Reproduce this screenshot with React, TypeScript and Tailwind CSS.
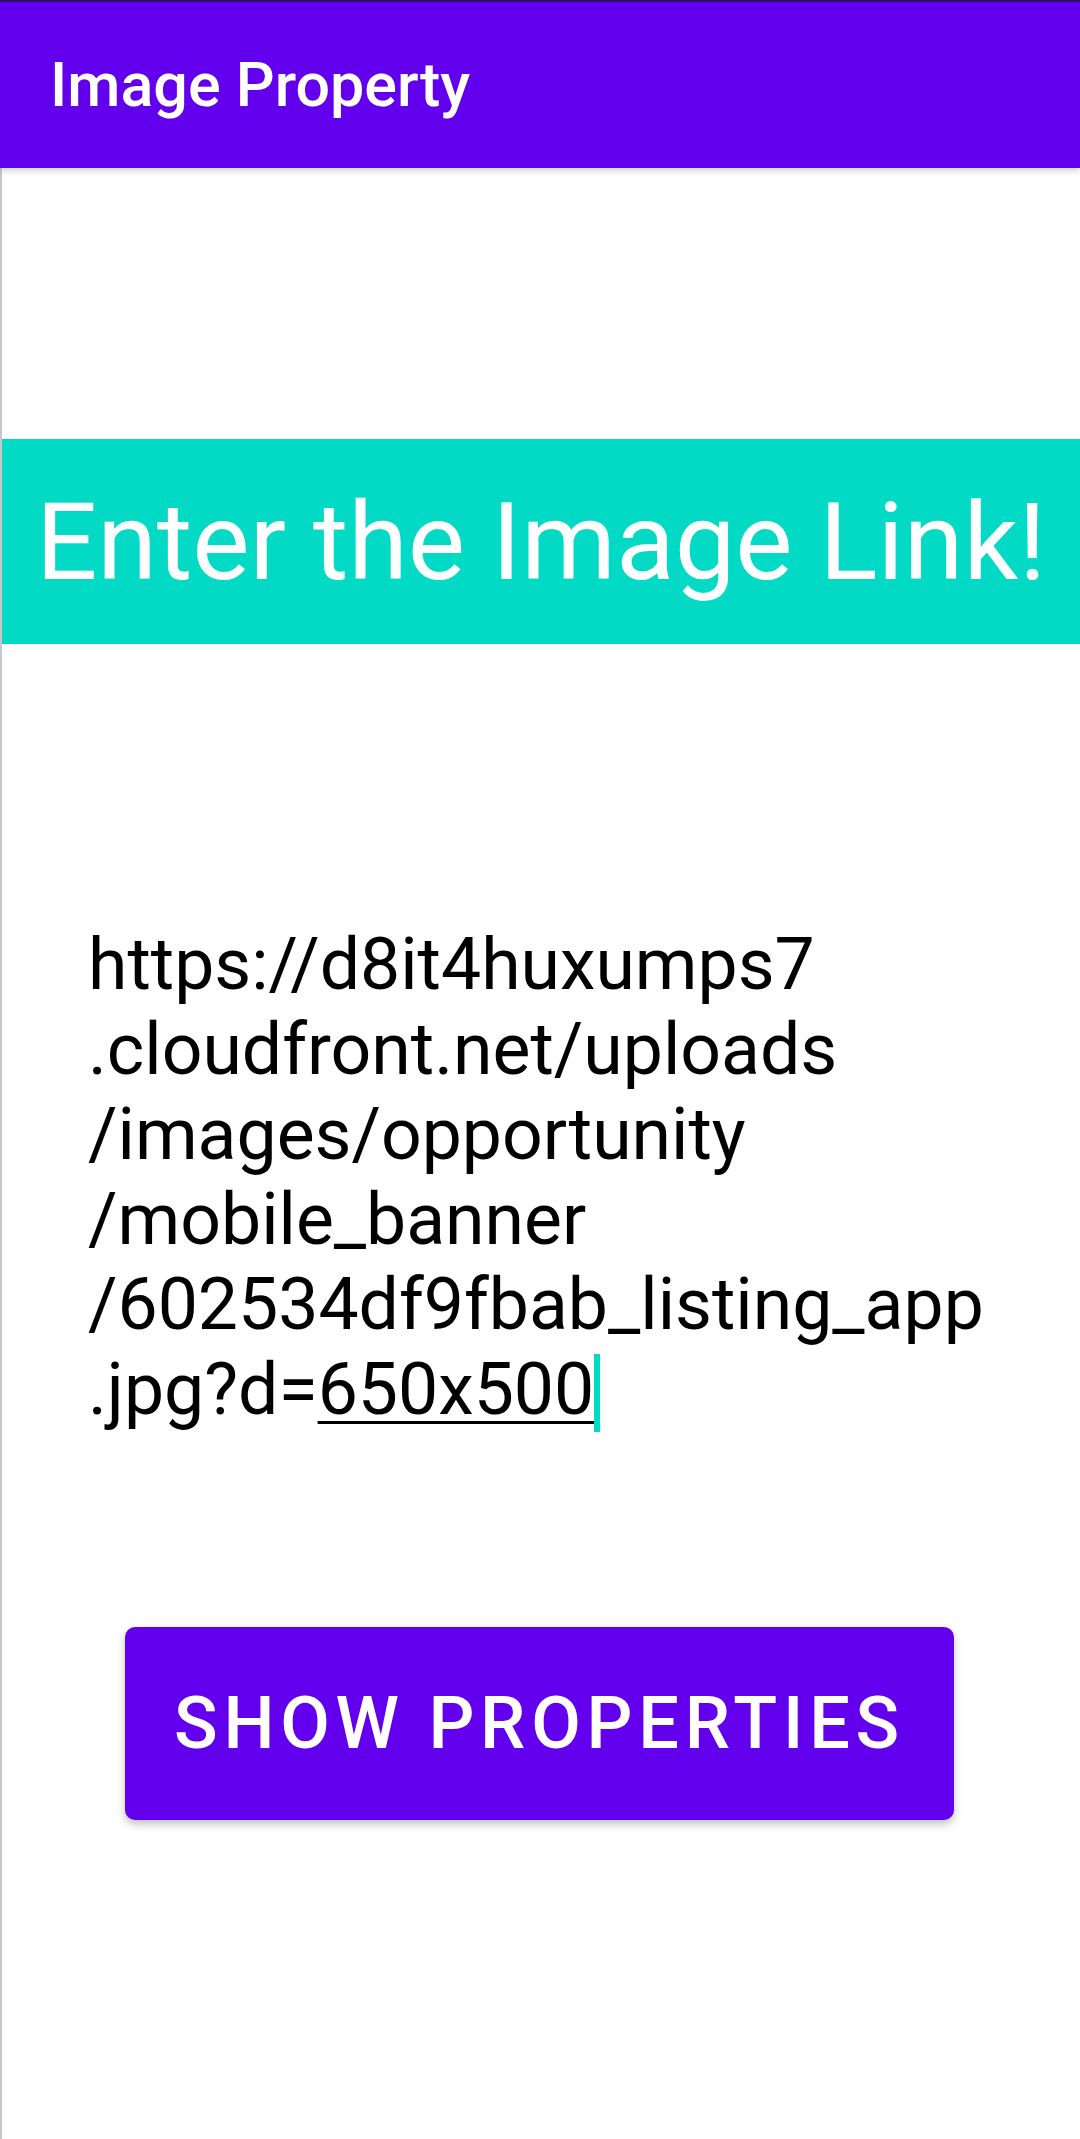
const urlLines = [
  'https://d8it4huxumps7',
  '.cloudfront.net/uploads',
  '/images/opportunity',
  '/mobile_banner',
  '/602534df9fbab_listing_app',
];

export default function App() {
  return (
    <div className="min-h-[2139px] bg-white font-['Roboto',sans-serif]">
      {/* App bar */}
      <header className="relative z-10 h-[168px] border-t-2 border-[#2a0f6b] bg-[#6200ee] shadow-[0_3px_6px_rgba(0,0,0,0.18)] flex items-center pl-[50px]">
        <h1 className="text-[61px] font-medium text-white leading-none">Image Property</h1>
      </header>

      <main className="min-h-[1971px] border-l-2 border-[#c8c8c8] pt-[271px]">
        {/* Banner */}
        <div className="h-[205px] bg-[#03dac5] flex items-center justify-center">
          <span className="text-[108px] text-white leading-none">Enter the Image Link!</span>
        </div>

        {/* Link field */}
        <div className="mt-[278px] pl-[86px] text-[71.5px] leading-[85px] text-black">
          {urlLines.map((line) => (
            <div key={line}>{line}</div>
          ))}
          <div>
            .jpg?d=
            <span className="underline decoration-[3px] underline-offset-[7px]">650x500</span>
            <span className="inline-block w-[6px] h-[78px] bg-[#03dac5] align-bottom" />
          </div>
        </div>

        {/* Button */}
        <div className="mt-[195px] pl-[123px]">
          <button className="w-[829px] h-[193px] rounded-[10px] bg-[#6200ee] text-white text-[72px] font-medium tracking-[0.08em] shadow-[0_4px_8px_rgba(0,0,0,0.25)]">
            SHOW PROPERTIES
          </button>
        </div>
      </main>
    </div>
  );
}
